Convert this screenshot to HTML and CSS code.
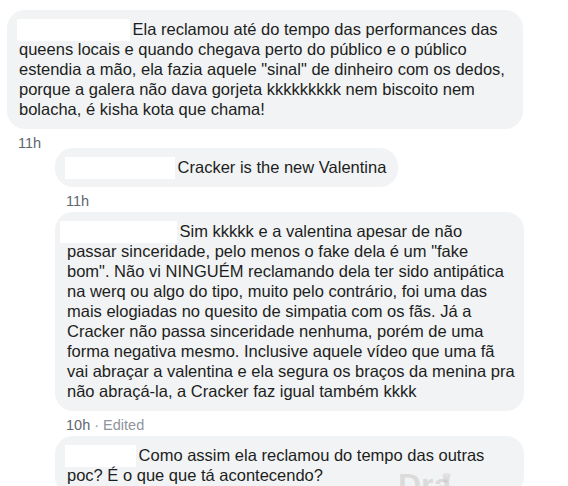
FILE: index.html
```html
<!DOCTYPE html>
<html lang="pt">

<head>
	<meta charset="UTF-8">
	<meta name="viewport" content="width=device-width, initial-scale=1.0">
	<title>Comentários</title>
	<link rel="stylesheet" href="styles.css">
</head>

<body>
	<div class="thread">
		<div class="comment">
			<div class="bubble wide">
				<span class="name name-1"></span> Ela reclamou até do tempo das performances das<br>
				queens locais e quando chegava perto do público e o público<br>
				estendia a mão, ela fazia aquele "sinal" de dinheiro com os dedos,<br>
				porque a galera não dava gorjeta kkkkkkkkk nem biscoito nem<br>
				bolacha, é kisha kota que chama!
			</div>
			<div class="meta"><span class="time">11h</span></div>
		</div>

		<div class="replies">
			<div class="comment">
				<div class="bubble">
					<span class="name name-2"></span> Cracker is the new Valentina
				</div>
				<div class="meta"><span class="time">11h</span></div>
			</div>

			<div class="comment">
				<div class="bubble reply-wide">
					<span class="name name-3"></span> Sim kkkkk e a valentina apesar de não<br>
					passar sinceridade, pelo menos o fake dela é um "fake<br>
					bom". Não vi NINGUÉM reclamando dela ter sido antipática<br>
					na werq ou algo do tipo, muito pelo contrário, foi uma das<br>
					mais elogiadas no quesito de simpatia com os fãs. Já a<br>
					Cracker não passa sinceridade nenhuma, porém de uma<br>
					forma negativa mesmo. Inclusive aquele vídeo que uma fã<br>
					vai abraçar a valentina e ela segura os braços da menina pra<br>
					não abraçá-la, a Cracker faz igual também kkkk
				</div>
				<div class="meta"><span class="time">10h</span> <span class="edited">· Edited</span></div>
			</div>

			<div class="comment">
				<div class="bubble reply-wide">
					<span class="name name-4"></span> Como assim ela reclamou do tempo das outras<br>
					poc? É o que que tá acontecendo?
				</div>
			</div>
		</div>
	</div>

	<div class="watermark">Dra<span class="crown">♛</span></div>
</body>

</html>
```

FILE: styles.css
```css
body {
	margin: 0;
	background-color: #ffffff;
	font-family: "Liberation Sans", Arial, sans-serif;
	color: #1c1e21;
	overflow: hidden;
	height: 486px;
	position: relative;
}

.thread {
	padding: 10px 0 0 7px;
}

.comment {
	display: flex;
	flex-direction: column;
	align-items: flex-start;
}

.bubble {
	box-sizing: border-box;
	background-color: #f2f3f5;
	border-radius: 18px;
	padding: 9px 12px 10px 12px;
	font-size: 16.5px;
	line-height: 20px;
	white-space: nowrap;
}

.wide {
	width: 516px;
}

.reply-wide {
	width: 469px;
}

.name {
	display: inline-block;
	height: 22px;
	background-color: #ffffff;
	vertical-align: top;
	margin: 0 -2px -2px -2px;
}

.name-1 {
	width: 113px;
}

.name-2 {
	width: 110px;
}

.name-3 {
	width: 117px;
	margin-left: -7px;
}

.name-4 {
	width: 71px;
}

.meta {
	margin: 6px 0 0 11px;
	font-size: 14.5px;
	line-height: 16px;
}

.time {
	color: #606770;
}

.edited {
	color: #90949c;
}

.replies {
	margin: -3px 0 0 48px;
}

.replies .comment {
	margin-bottom: 3px;
}

.replies .comment:nth-child(3) .meta {
	margin-top: 5px;
}

.replies .comment:nth-child(3) {
	margin-bottom: 1px;
}

.watermark {
	position: absolute;
	left: 398px;
	top: 467px;
	font-size: 32px;
	font-weight: bold;
	color: rgba(190, 190, 190, 0.45);
}

.crown {
	font-size: 12px;
	vertical-align: 14px;
	margin-left: -10px;
}
```
